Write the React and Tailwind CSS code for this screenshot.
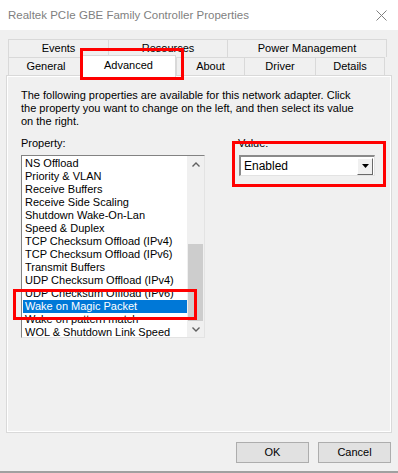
const props = [
  'NS Offload',
  'Priority & VLAN',
  'Receive Buffers',
  'Receive Side Scaling',
  'Shutdown Wake-On-Lan',
  'Speed & Duplex',
  'TCP Checksum Offload (IPv4)',
  'TCP Checksum Offload (IPv6)',
  'Transmit Buffers',
  'UDP Checksum Offload (IPv4)',
  'UDP Checksum Offload (IPv6)',
  'Wake on Magic Packet',
  'Wake on pattern match',
  'WOL & Shutdown Link Speed',
]

function Tab({ w, children }) {
  return (
    <div className={`${w} flex items-center justify-center border-t border-l border-[#d9d9d9] last:border-r`}>
      {children}
    </div>
  )
}

export default function App() {
  return (
    <div className="relative w-[398px] h-[473px] bg-[#f0f0f0] overflow-hidden text-[11px] leading-[13px] text-black font-['Liberation_Sans',Arial,sans-serif]">
      {/* title bar */}
      <div className="h-[30px] bg-white flex items-center justify-between pl-[8px] pr-[10px]">
        <span className="text-[11.5px] text-[#7f7f7f]">Realtek PCIe GBE Family Controller Properties</span>
        <svg width="11" height="11" viewBox="0 0 11 11" className="mr-[1px]">
          <path d="M0.5 0.5L10.5 10.5M10.5 0.5L0.5 10.5" stroke="#7f7f7f" strokeWidth="1" />
        </svg>
      </div>

      {/* tabs */}
      <div className="pl-[8px] pt-[9px]">
        <div className="flex h-[18px]">
          <Tab w="w-[100px]">Events</Tab>
          <Tab w="w-[119px]">Resources</Tab>
          <Tab w="w-[160px]">Power Management</Tab>
        </div>
        <div className="flex h-[18px]">
          <Tab w="w-[75px]">General</Tab>
          <div className="relative z-10 w-[95px] -mt-[2px] h-[22px] bg-white border-t border-l border-r border-[#d9d9d9] flex items-start justify-center pt-[3px] -ml-[2px]">
            Advanced
          </div>
          <Tab w="w-[68px]">About</Tab>
          <Tab w="w-[71px]">Driver</Tab>
          <Tab w="w-[70px]">Details</Tab>
        </div>
      </div>

      {/* panel */}
      <div className="ml-[6px] w-[386px] h-[358px] border border-[#d9d9d9]">
        <div className="h-full border border-white pl-[13px] pt-[12px]">
          <p className="w-[340px]">
            The following properties are available for this network adapter. Click the property you want to change on the left, and then select its value on the right.
          </p>
          <div className="flex mt-[9px]">
            <div>
              <div className="h-[13px]">Property:</div>
              <div className="mt-[5px] w-[184px] h-[183px] bg-white border-t border-l border-[#828282] border-r border-b border-r-[#e3e3e3] border-b-[#e3e3e3] flex">
                <ul className="flex-1 pt-[1px] pl-[1px]">
                  {props.map(p => (
                    <li
                      key={p}
                      className={`h-[13px] pl-[2px] whitespace-nowrap ${p === 'Wake on Magic Packet' ? 'bg-[#0078d7] text-white' : ''}`}
                    >
                      {p}
                    </li>
                  ))}
                </ul>
                <div className="w-[17px] bg-[#f0f0f0] flex flex-col">
                  <div className="h-[17px] flex items-center justify-center">
                    <svg width="8" height="5" viewBox="0 0 8 5"><path d="M0.5 4.5L4 1L7.5 4.5" stroke="#606060" strokeWidth="1.4" fill="none" /></svg>
                  </div>
                  <div className="flex-1 flex flex-col px-[1px]">
                    <div className="h-[72px]" />
                    <div className="h-[77px] bg-[#cdcdcd]" />
                  </div>
                  <div className="h-[17px] flex items-center justify-center">
                    <svg width="8" height="5" viewBox="0 0 8 5"><path d="M0.5 0.5L4 4L7.5 0.5" stroke="#606060" strokeWidth="1.4" fill="none" /></svg>
                  </div>
                </div>
              </div>
            </div>
            <div className="ml-[33px]">
              <div className="h-[13px]">Value:</div>
              <div className="mt-[5px] ml-[1px] w-[136px] h-[21px] bg-white border-t-2 border-l-2 border-t-[#8a8a8a] border-l-[#8a8a8a] border-b border-r border-b-[#e3e3e3] border-r-[#e3e3e3] flex items-center">
                <span className="flex-1 pl-[3px] text-[12px]">Enabled</span>
                <div className="w-[16px] h-[17px] mr-[1px] bg-[#f0f0f0] border border-t-white border-l-white border-r-[#696969] border-b-[#696969] flex items-center justify-center">
                  <svg width="7" height="4" viewBox="0 0 7 4"><path d="M0 0H7L3.5 4Z" fill="#000" /></svg>
                </div>
              </div>
            </div>
          </div>
        </div>
      </div>

      {/* buttons */}
      <div className="flex justify-end gap-[9px] pr-[7px] mt-[9px]">
        <button className="w-[73px] h-[21px] bg-[#e1e1e1] border border-[#adadad]">OK</button>
        <button className="w-[73px] h-[21px] bg-[#e1e1e1] border border-[#adadad]">Cancel</button>
      </div>
      <div className="absolute left-0 right-0 bottom-0 h-[2px] bg-[#a0a0a0]" />

      {/* red highlight boxes */}
      <div className="absolute left-[80px] top-[48px] w-[104px] h-[32px] border-[3px] border-[#ff0000] z-20" />
      <div className="absolute left-[232px] top-[141px] w-[154px] h-[46px] border-[3px] border-[#ff0000] z-20" />
      <div className="absolute left-[13px] top-[289px] w-[184px] h-[31px] border-[3px] border-[#ff0000] z-20" />
    </div>
  )
}
